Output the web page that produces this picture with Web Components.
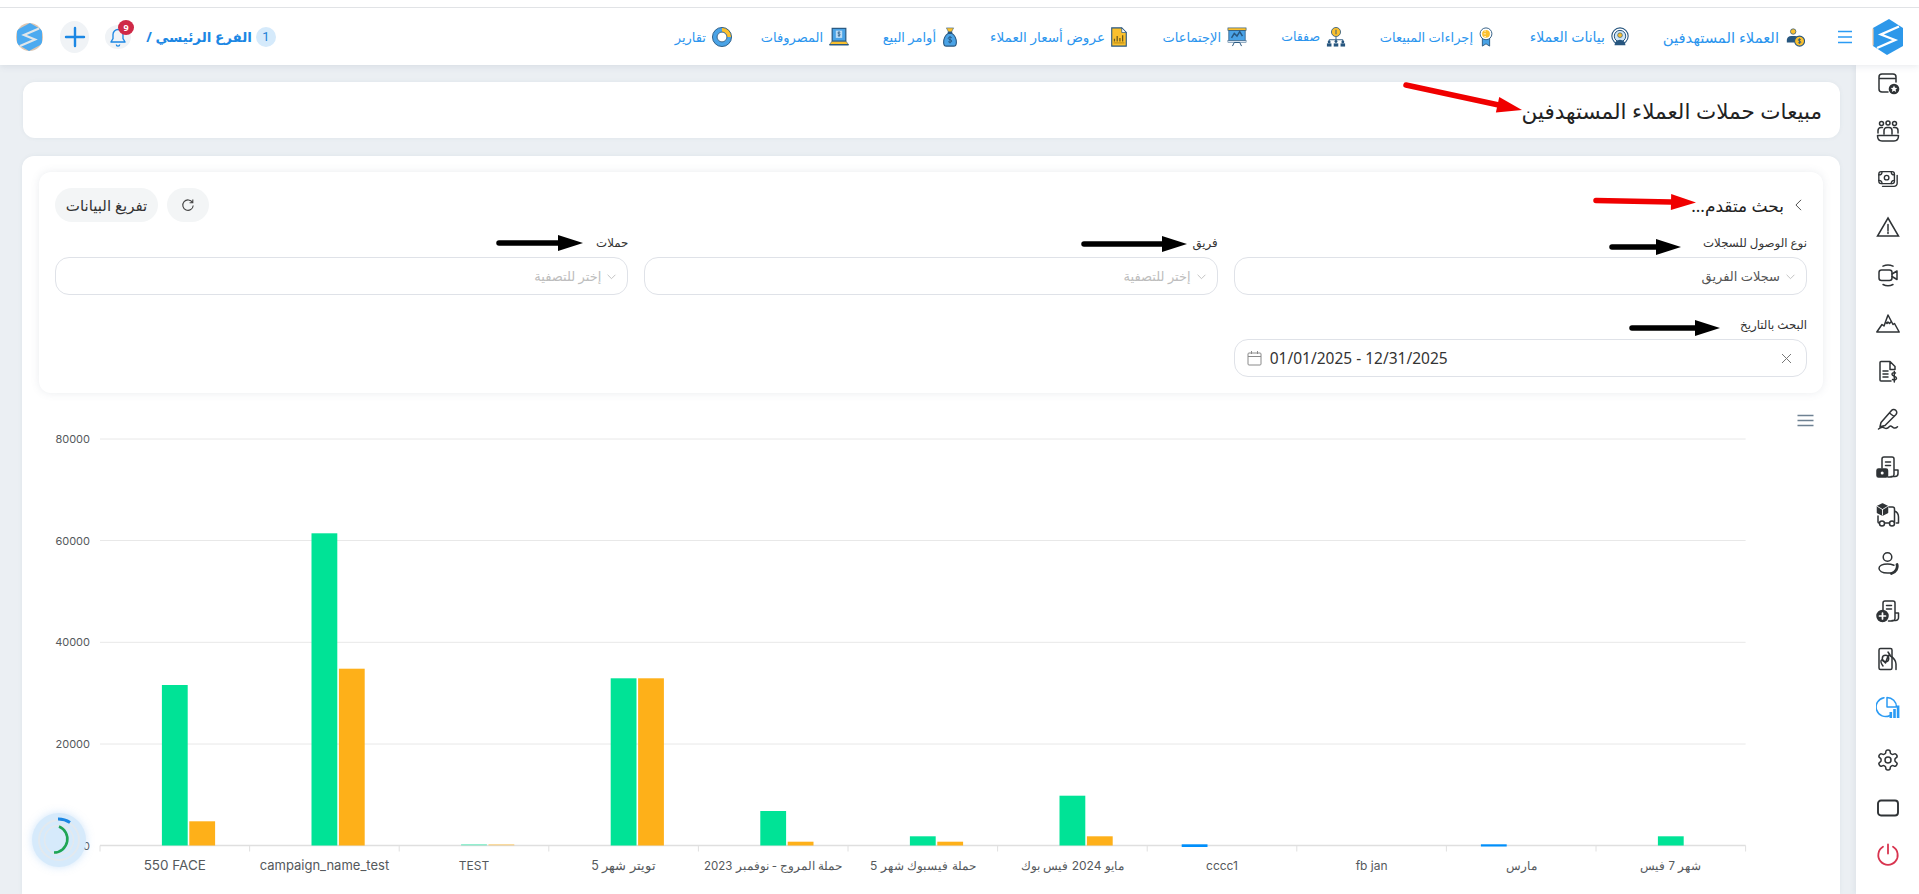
<!DOCTYPE html>
<html lang="ar" dir="rtl"><head><meta charset="utf-8"><title>مبيعات حملات العملاء المستهدفين</title>
<style>
html,body{margin:0;padding:0;height:100%;overflow:hidden;background:#fff}
body{font-family:"Noto Sans","DejaVu Sans",sans-serif;color:#333}
</style></head><body>
<app-shell>
  <top-bar slot="top">
    <brand-logo slot="start"></brand-logo>
    <ui-icon slot="start" name="menu" size="18" style="color:#2b9bf4;margin-inline-start:18px"></ui-icon>
    <nav-item icon="n1" iw="19" w="118" fs="14.8">العملاء المستهدفين</nav-item>
    <nav-item icon="n2" iw="17" w="79" fs="14">بيانات العملاء</nav-item>
    <nav-item icon="n3" iw="14" w="94" fs="13">إجراءات المبيعات</nav-item>
    <nav-item icon="n4" iw="20" w="40" fs="12.500">صفقات</nav-item>
    <nav-item icon="n5" iw="20" w="61" fs="13">الإجتماعات</nav-item>
    <nav-item icon="n6" iw="16" w="115" fs="13.600">عروض أسعار العملاء</nav-item>
    <nav-item icon="n7" iw="15" w="54" fs="13">أوامر البيع</nav-item>
    <nav-item icon="n8" iw="20" w="59" fs="13">المصروفات</nav-item>
    <nav-item icon="n9" iw="19" w="28" fs="13">تقارير</nav-item>
    <branch-tools slot="end"></branch-tools>
  </top-bar>
  <side-rail slot="rail"></side-rail>
  <page-title>مبيعات حملات العملاء المستهدفين</page-title>
  <main-card>
    <filter-card>
      <filter-field label="نوع الوصول للسجلات"><select-box value="سجلات الفريق"></select-box></filter-field>
      <filter-field label="فريق"><select-box placeholder="إختر للتصفية"></select-box></filter-field>
      <filter-field label="حملات"><select-box placeholder="إختر للتصفية"></select-box></filter-field>
      <filter-field label="البحث بالتاريخ"><date-box>01/01/2025 - 12/31/2025</date-box></filter-field>
    </filter-card>
    <bar-chart></bar-chart>
  </main-card>
  <note-arrow x1="1406" y1="85" x2="1522" y2="110" color="#f00000"></note-arrow>
  <note-arrow x1="1596" y1="200.5" x2="1696" y2="202.5" color="#f00000"></note-arrow>
  <note-arrow x1="1612" y1="247" x2="1681" y2="247" color="#000"></note-arrow>
  <note-arrow x1="1632" y1="328" x2="1720" y2="328" color="#000"></note-arrow>
  <note-arrow x1="1084" y1="244" x2="1187" y2="244" color="#000"></note-arrow>
  <note-arrow x1="499" y1="243" x2="583" y2="243" color="#000"></note-arrow>
  <busy-spinner></busy-spinner>
</app-shell>
<script>
const S='#2f3336';
const Y='#fbc02d',N='#27567f',B='#4aa3e6';
const ICONS={
menu:`<path d="M2 3.5h14M2 9h14M2 14.5h14" stroke="currentColor" stroke-width="1.5" fill="none"/>`,
chev:`<path d="M3 5.5 7.5 10 12 5.5" fill="none" stroke="currentColor" stroke-width="1"/>`,
plus:`<path d="M12 3v18M3 12h18" stroke="currentColor" stroke-width="2.4" stroke-linecap="round"/>`,
bell:`<path d="M12 3a6 6 0 0 0-6 6v5l-2.5 4h17L18 14V9a6 6 0 0 0-6-6zM10 21a2 2 0 0 0 4 0" fill="none" stroke="currentColor" stroke-width="1.6" stroke-linejoin="round"/>`,
n1:`<circle cx="9" cy="5" r="3" fill="${Y}" stroke="${N}" stroke-width=".8"/><path d="M2 17v-3a5 5 0 0 1 5-4h4a5 5 0 0 1 3 1l-4 6z" fill="${N}"/><circle cx="16" cy="15.5" r="5.5" fill="${Y}" stroke="${N}" stroke-width="1.2"/><path d="M16 12.5v6M17.6 14c-1-1-3.2-.8-3.2.4s3.2.9 3.2 2.2-2.2 1.4-3.2.4" fill="none" stroke="${N}" stroke-width=".9"/>`,
n2:`<circle cx="11" cy="10" r="9" fill="#fff" stroke="${N}" stroke-width="1.2"/><circle cx="11" cy="10" r="6.3" fill="#cfe6f8" stroke="${N}" stroke-width="1.1"/><circle cx="11" cy="9" r="2.6" fill="${Y}" stroke="${N}" stroke-width=".7"/><path d="M5 20a6 6 0 0 1 12 0z" fill="${N}"/>`,
n3:`<path d="M7 12v9l4-2.5L15 21v-9z" fill="${B}" stroke="${N}" stroke-width="1"/><circle cx="11" cy="7.5" r="6.5" fill="#fff" stroke="${N}" stroke-width="1"/><circle cx="11" cy="7.5" r="4.3" fill="${Y}"/><path d="M11 4.5h-2M11 7.5H8.5M11 10.5H9" stroke="#fff" stroke-width=".8"/>`,
n4:`<circle cx="11" cy="5.5" r="5" fill="${Y}" stroke="${N}" stroke-width=".9"/><path d="M11 3v5" stroke="${N}" stroke-width="1"/><path d="M11 11v3M3.5 16v-2h15v2" stroke="${N}" fill="none" stroke-width="1"/><g fill="${N}"><circle cx="3.5" cy="16.5" r="1.6"/><circle cx="11" cy="16" r="1.6"/><circle cx="18.5" cy="16.5" r="1.6"/><rect x="1" y="18" width="5" height="3.5"/><rect x="8.5" y="18" width="5" height="3.5"/><rect x="16" y="18" width="5" height="3.5"/></g>`,
n5:`<rect x="1" y="1" width="20" height="3" fill="${Y}" stroke="${N}" stroke-width=".7"/><rect x="2" y="4" width="18" height="11" fill="${B}" stroke="${N}" stroke-width=".8"/><path d="M5 12l3-5 3 3 3-5 3 5" fill="none" stroke="${N}" stroke-width="1.6"/><rect x="1" y="15" width="20" height="2" fill="#d9e6f2" stroke="${N}" stroke-width=".5"/><path d="M6 21l2-4h6l2 4" fill="none" stroke="${N}" stroke-width="1.1"/>`,
n6:`<path d="M3 1h11l5 5v15H3z" fill="${Y}" stroke="${N}" stroke-width="1.2"/><path d="M14 1v5h5z" fill="#fff" stroke="${N}" stroke-width=".8"/><path d="M6 16v-3M9 16v-6M12 16v-4M15 16V9" stroke="#6b5a1e" stroke-width="1.4"/><path d="M5 17.5h12" stroke="#b98d12" stroke-width="1.2"/>`,
n7:`<path d="M7 1h8l-2.4 4.5H9.4z" fill="${Y}" stroke="${N}" stroke-width=".6"/><rect x="8.5" y="5.2" width="5" height="1.6" fill="${N}"/><path d="M9 7c-3 2-5 6-5 10 0 3 1.500 4 3 4h8c1.500 0 3-1 3-4 0-4-2-8-5-10z" fill="${B}" stroke="${N}" stroke-width="1.2"/><path d="M11 10v8M13 11.8c-1-1-4-.9-4 .7s4 1.2 4 2.9-3 1.7-4 .7" fill="none" stroke="${N}" stroke-width="1"/>`,
n8:`<rect x="3.5" y="1.5" width="15" height="14" fill="${B}" stroke="${N}" stroke-width="1.3"/><rect x="7.5" y="4" width="7" height="8" fill="#bcdcf5"/><path d="M11 5v6M12.4 6c-.8-.7-2.8-.6-2.8.6s2.8.8 2.8 2-2 1.1-2.8.5" fill="none" stroke="${N}" stroke-width=".8"/><path d="M3 16h16l2.5 3.5h-21z" fill="${Y}" stroke="${N}" stroke-width=".6"/><path d="M.5 19.5h21" stroke="${N}" stroke-width="1.5"/>`,
n9:`<circle cx="11" cy="11" r="8" fill="none" stroke="${B}" stroke-width="5"/><path d="M11 3a8 8 0 0 1 8 8" fill="none" stroke="${Y}" stroke-width="5"/><circle cx="11" cy="11" r="10.5" fill="none" stroke="${N}" stroke-width="1"/><circle cx="11" cy="11" r="5.4" fill="#fff" stroke="${N}" stroke-width="1"/>`,
r1:`<path d="M20 11V6a3 3 0 0 0-3-3H6a3 3 0 0 0-3 3v12a3 3 0 0 0 3 3h6M3 7.5h17"/><circle cx="18" cy="18" r="5.3" fill="${S}" stroke="none"/><path d="M18 14.6l1 2.2 2.3.2-1.7 1.6.5 2.3-2.1-1.2-2.1 1.2.5-2.3-1.7-1.6 2.3-.2z" fill="#fff" stroke="none"/>`,
r2:`<circle cx="5.5" cy="4.5" r="2"/><circle cx="12" cy="4" r="2"/><circle cx="18.5" cy="4.5" r="2"/><path d="M2 14v-2.500a3 3 0 0 1 3-3h1.500M22 14v-2.500a3 3 0 0 0-3-3h-1.500M8 15v-3.500a3 3 0 0 1 3-3h2a3 3 0 0 1 3 3V15M1.500 16.500h21c0 3.500-2 5.500-4.500 5.500H6c-2.500 0-4.500-2-4.500-5.500z"/>`,
r3:`<rect x="2" y="4" width="17" height="13" rx="2.500"/><circle cx="10.500" cy="10.500" r="2.500"/><path d="M2 7.500c2 0 3.500-1.500 3.500-3.500M19 7.500c-2 0-3.500-1.500-3.500-3.500M2 13.500c2 0 3.500 1.500 3.500 3.500M19 13.500c-2 0-3.500 1.500-3.500 3.500M22 8v8.500a3.500 3.500 0 0 1-3.500 3.500H6"/>`,
r4:`<path d="M12 3 22.500 21h-21z" stroke-linejoin="miter"/><path d="M12 9.500v6M12 17v1.500"/>`,
r5:`<rect x="3" y="7" width="13" height="10.500" rx="2.500"/><path d="M16 11l5-3v8.500l-5-3M7 3.200a11 11 0 0 1 10 0M7 21.500a11 11 0 0 0 10 0"/>`,
r6:`<path d="M.800 21 6 13.500l2 1.500 4-11 5 9.500 1.500-1 4.700 8.500zM9.500 11l1.500 1.500 1-1.500 1.500 1.500 1.300-1.500"/>`,
r7:`<path d="M14 2.500H5a1 1 0 0 0-1 1V21a1 1 0 0 0 1 1h10M14 2.500l5 5v3h-5zM7 12h5M7 15h5M7 18h5M19.500 14c-2-.8-3.500 0-3.500 1.300 0 2.500 4.500 1.500 4.500 4 0 1.400-2 2-4 1.200M18.300 12.500v10.500"/>`,
r8:`<path d="M5 15.500 15.500 3.500a3 3 0 0 1 4.500 4L9 18.500l-5 1.200zM13.500 6l4.500 3.500M2.500 22c3-2.500 4.500-2 6-1s3 .8 5-1.500c1.500-1.600 2.500.5 4 1.200 1.500.6 3 0 4-1"/>`,
r9:`<path d="M6 13V4a2 2 0 0 1 2-2h8a2 2 0 0 1 2 2v15.500a3 3 0 0 1-3 2.500h-3M18 15h4v3.500a3 3 0 0 1-3 3h-4M9.500 7h5M9.500 10.500h5"/><rect x="1" y="14" width="10.500" height="8" rx="1.500" fill="${S}"/><circle cx="6.200" cy="18" r="1.500" fill="#fff" stroke="none"/>`,
r10:`<path d="M6.500 1 11.500 3.500v6L6.500 12 1.500 9.500v-6z" fill="${S}"/><path d="M6.500 6.500 1.500 3.500M6.500 6.500l5-3M6.500 6.500V12" stroke="#fff" stroke-width=".9"/><path d="M13 4h3.500c1.500 0 2 1 2 2v14M18.500 8c2.500 1 4 3.500 4 6v6h-2M2 13v6a1 1 0 0 0 1 1M9 20h4.500"/><circle cx="6" cy="20.500" r="2.500"/><circle cx="16" cy="20.500" r="2.500"/>`,
r11:`<circle cx="11.500" cy="6" r="4.300"/><path d="M18 14.300c-2-.8-4-1.300-6.500-1.300-5 0-8.500 1.800-8.500 4.300S6 22 11.500 22H16"/><path d="M21 13.500c1 3.500-1 7.500-5.500 9" stroke-width="2.800"/>`,
r12:`<path d="M7 12V4a2 2 0 0 1 2-2h8a2 2 0 0 1 2 2v15.500a3 3 0 0 1-3 2.500h-3.500M19 14h3.500v4a3 3 0 0 1-3 3.500H16M10.500 6.500h5M10.500 10h5"/><circle cx="6.500" cy="17" r="5.500" fill="${S}"/><path d="M6.500 14v6M3.500 17h6" stroke="#fff" stroke-width="1.700"/>`,
r13:`<rect x="3" y="1.500" width="13" height="21" rx="1.500"/><circle cx="9.500" cy="11.500" r="3.200"/><path d="M7 19c-1.500-2-3-5-1.500-6 1-.6 2.500 1 4 3 1-3 2-6 3.500-8 2.500 1.500 7 5 7 9v5.500"/><path d="M14 8l-2-3"/>`,
r14:`<path d="M11 2.500v9.500h9.500a9.500 9.500 0 0 0-9.500-9.500zM14 20.500a9.500 9.500 0 1 1-6-17.800" fill="none"/><g fill="#2b9bf4" stroke="none"><rect x="13.500" y="17" width="2.600" height="6"/><rect x="17.200" y="14" width="2.600" height="9"/><rect x="20.800" y="10.500" width="2.600" height="12.500"/></g>`,
r15:`<path d="M12.220 2h-.44a2 2 0 0 0-2 2v.18a2 2 0 0 1-1 1.730l-.43.250a2 2 0 0 1-2 0l-.15-.08a2 2 0 0 0-2.730.730l-.22.380a2 2 0 0 0 .730 2.730l.15.100a2 2 0 0 1 1 1.720v.510a2 2 0 0 1-1 1.740l-.15.090a2 2 0 0 0-.730 2.730l.22.380a2 2 0 0 0 2.730.730l.15-.08a2 2 0 0 1 2 0l.43.250a2 2 0 0 1 1 1.730V20a2 2 0 0 0 2 2h.44a2 2 0 0 0 2-2v-.18a2 2 0 0 1 1-1.730l.43-.25a2 2 0 0 1 2 0l.15.080a2 2 0 0 0 2.730-.730l.22-.390a2 2 0 0 0-.730-2.730l-.15-.08a2 2 0 0 1-1-1.740v-.5a2 2 0 0 1 1-1.740l.15-.09a2 2 0 0 0 .730-2.730l-.22-.380a2 2 0 0 0-2.730-.730l-.15.080a2 2 0 0 1-2 0l-.43-.25a2 2 0 0 1-1-1.730V4a2 2 0 0 0-2-2z"/><circle cx="12" cy="12" r="3"/>`,
r16:`<rect x="2" y="4.500" width="20" height="15" rx="3" stroke-width="1.900"/>`,
r17:`<path d="M12 2.500v9M7 4.800a9.700 9.700 0 1 0 10 0" stroke="#d8344f" stroke-width="1.800"/>`
};
const def=(name,css,html,init)=>customElements.define(name,class extends HTMLElement{
  constructor(){super();this.attachShadow({mode:'open'}).innerHTML=`<style>${css}</style>${html}`;}
  connectedCallback(){init&&init(this,this.shadowRoot)}
});
const vb=n=>n=='menu'?18:n=='chev'?15:/^n\d/.test(n)?22:24;
const svgIcon=(n,s)=>{const stroked=n[0]=='r';const v=vb(n);return `<svg width="${s}" height="${s}" viewBox="0 0 ${v} ${v}" ${stroked?`fill="none" stroke="${n=='r14'?'#2b9bf4':S}" stroke-width="1.500" stroke-linecap="round" stroke-linejoin="round"`:''} style="display:block;flex:none">${ICONS[n]}</svg>`};
def('ui-icon',':host{display:inline-flex;flex:none;justify-content:center}','',(h,r)=>{const b=document.createElement('template');b.innerHTML=svgIcon(h.getAttribute('name'),h.getAttribute('size')||24);r.appendChild(b.content)});
def('app-shell',`:host{display:grid;position:relative;width:1919px;height:894px;overflow:hidden;grid-template-columns:63px 1fr;grid-template-rows:65px 1fr;background:#ebeff3;direction:rtl}
 .top{grid-column:1/3;grid-row:1;z-index:3;}
 .rail{grid-column:1;grid-row:2;z-index:2}
 .main{grid-column:2;grid-row:2;padding:17px 16px 0 23px;display:flex;flex-direction:column;gap:18px;min-width:0;overflow:hidden}
`,`<div class="top"><slot name="top"></slot></div><div class="rail"><slot name="rail"></slot></div><div class="main"><slot></slot></div>`);
def('top-bar',`:host{display:flex;box-sizing:border-box;background:#fff;border-top:1px solid #e1e3e6;margin-top:7px;height:58px;align-items:center;padding:0 15px 0 16px;box-shadow:0 2px 6px rgba(90,110,130,.12);position:relative}
 .nav{display:flex;gap:33px;margin-inline-start:32px;align-items:center}
 .s{display:flex;align-items:center}.e{margin-inline-start:auto}
 :host::before{content:"";position:absolute;left:0;right:0;top:-8px;height:7px;background:#fff}
`,`<div class="s"><slot name="start"></slot></div><div class="nav"><slot></slot></div><div class="e"><slot name="end"></slot></div>`);
def('brand-logo',':host{display:block;width:32px;height:36px}',`<svg width="32" height="36" viewBox="0 0 32 36" style="display:block"><path d="M17 0 31 9V27L15 36 1 27V9z" fill="#2d98ea"/><path d="M1 9.500v17" stroke="#f5c9a0" stroke-width="1.200"/><path d="M27 7.500 9 15.500l14 5.500-18 8" fill="none" stroke="#fff" stroke-width="2.400" stroke-linejoin="miter"/></svg>`);
def('nav-item',`:host{display:inline-flex;align-items:center;gap:6px;color:#2b95ee;white-space:nowrap}
 .i{display:flex;justify-content:center;height:20px}
 span{display:block;text-align:right}`,`<div class="i"></div><span><slot></slot></span>`,(h,r)=>{
  const box=r.querySelector('.i'),d=document.createElement('ui-icon');d.setAttribute('name',h.getAttribute('icon'));d.setAttribute('size',20);box.appendChild(d);
  box.style.width=h.getAttribute('iw')+'px';
  const s=r.querySelector('span');s.style.width=h.getAttribute('w')+'px';s.style.fontSize=h.getAttribute('fs')+'px';
});
def('branch-tools',`:host{display:flex;align-items:center;direction:rtl}
 .n{width:20px;height:20px;border-radius:50%;background:#d5eafb;color:#1b7fd6;font-size:13px;display:flex;align-items:center;justify-content:center;font-family:Roboto,sans-serif}
 .b{color:#1b87e4;font-weight:700;font-size:13.500px;margin-inline-start:4px;white-space:nowrap;width:104px}
 .bell{position:relative;width:26px;height:24px;border-radius:50%;background:#f0f3f6;display:flex;align-items:center;justify-content:center;color:#1b87e4;margin-inline-start:17px}
 .bd{position:absolute;top:-5px;right:-3px;width:16px;height:15px;border-radius:50%;background:#cf2947;color:#fff;font-size:9px;font-weight:700;display:flex;align-items:center;justify-content:center}
 .plus{width:29px;height:32px;border-radius:50%;background:#f0f3f6;display:flex;align-items:center;justify-content:center;color:#1b87e4;margin-inline-start:16px}
 .av{width:27px;height:28px;border-radius:50%;overflow:hidden;margin-inline-start:17px;background:#dcc6b2}
`,`<div class="n">1</div><div class="b">الفرع الرئيسي /</div><div class="bell"><ui-icon name="bell" size="20"></ui-icon><div class="bd">9</div></div><div class="plus"><ui-icon name="plus" size="24"></ui-icon></div><div class="av"><svg width="27" height="28" viewBox="0 0 27 28" style="display:block"><path d="M14 0 26 7v14L13 28 1 21V7z" fill="#4caaf0"/><path d="M23 5.500 8 12l11 4.500L4 23" fill="none" stroke="#dfe6ea" stroke-width="2.200"/></svg></div>`);
def('side-rail',`:host{display:flex;flex-direction:column;align-items:center;gap:24px;background:#fff;height:100%;padding-top:6px;box-sizing:border-box;box-shadow:-2px 0 5px rgba(90,110,130,.08)}`,
 Array.from({length:17},(_,i)=>`<ui-icon name="r${i+1}" size="${i==2?22:24}" style="${i==2?'margin:1px 0;':''}${i==14?'margin-top:5px;':''}${i==16?'margin-top:-2px;':''}"></ui-icon>`).join(''));
def('page-title',`:host{display:flex;align-items:center;height:56px;flex:none;background:#fff;border-radius:12px;padding:0 18px;font-size:21.500px;color:#222;box-shadow:0 0 4px rgba(90,110,130,.08)}`,`<slot></slot>`);
def('main-card',`:host{display:block;flex:1;background:#fff;border-radius:12px 12px 0 0;margin-inline-end:1px;padding:16px 17px 0;margin-left:-1px;box-shadow:0 0 4px rgba(90,110,130,.08)}`,`<slot></slot>`);
def('filter-card',`:host{display:block;background:#fff;border-radius:12px;padding:16px;box-shadow:0 0 8px rgba(90,110,130,.13)}
 .h{display:flex;justify-content:space-between;align-items:center;height:34px;margin-bottom:11px}
 .t{display:flex;align-items:center;gap:11px;font-size:17px;color:#222}
 .btns{display:flex;gap:9px}
 .btn{height:34px;border-radius:17px;background:#f3f5f6;display:flex;align-items:center;justify-content:center;font-size:15px;color:#333;box-sizing:border-box}
 .g{display:grid;grid-template-columns:repeat(3,1fr);column-gap:16px;row-gap:20px}
 svg{display:block}
`,`<div class="h"><div class="t"><svg width="7" height="12" viewBox="0 0 8 14" style="margin-inline-start:5px"><path d="M7 1 1 7l6 6" fill="none" stroke="#333" stroke-width="1"/></svg><span>بحث متقدم...</span></div>
<div class="btns"><div class="btn" style="width:42px"><svg width="14" height="14" viewBox="0 0 14 14"><path d="M11.500 4.500A5.200 5.200 0 1 0 12.200 7.500M11.800 1.500v3.200H8.600" fill="none" stroke="#444" stroke-width="1.100"/></svg></div><div class="btn" style="width:103px">تفريغ البيانات</div></div></div>
<div class="g"><slot></slot></div>`);
def('filter-field',`:host{display:block;min-width:0}
 label{display:block;height:19px;line-height:19px;margin-bottom:5px;font-size:11.800px;color:#333;white-space:nowrap}`,`<label></label><slot></slot>`,(h,r)=>{r.querySelector('label').textContent=h.getAttribute('label')});
def('select-box',`:host{display:flex;align-items:center;height:38px;box-sizing:border-box;border:1px solid #dfe2e8;border-radius:14px;padding:0 9px;gap:4px;font-size:13px;color:#555}
 .p{color:#bdbdbd}`,`<ui-icon name="chev" size="13" style="color:#bbb"></ui-icon><span></span>`,(h,r)=>{const s=r.querySelector('span');if(h.hasAttribute('value'))s.textContent=h.getAttribute('value');else{s.textContent=h.getAttribute('placeholder');s.className='p'}});
def('date-box',`:host{display:flex;direction:ltr;align-items:center;height:38px;box-sizing:border-box;border:1px solid #dfe2e8;border-radius:14px;padding:0 14px 0 12px;gap:8px;font:15.500px "Noto Sans",sans-serif;color:#333}
 .x{margin-left:auto}svg{display:block}`,`<svg width="15" height="16" viewBox="0 0 15 16"><path d="M2 3h11a1 1 0 0 1 1 1v10a1 1 0 0 1-1 1H2a1 1 0 0 1-1-1V4a1 1 0 0 1 1-1zM1 6.500h13M4.500 1v3M10.500 1v3" fill="none" stroke="#8a8a8a" stroke-width="1"/></svg><span><slot></slot></span><svg class="x" width="11" height="11" viewBox="0 0 11 11"><path d="M1 1l9 9M10 1l-9 9" stroke="#777" stroke-width="1"/></svg>`);
def('note-arrow',`:host{position:absolute;left:0;top:0;width:0;height:0;z-index:5;pointer-events:none}svg{position:absolute;left:0;top:0;overflow:visible}`,`<svg width="1" height="1"></svg>`,(h,r)=>{
  const [a,b,c,d]=['x1','y1','x2','y2'].map(k=>+h.getAttribute(k)),col=h.getAttribute('color');
  const L=Math.hypot(c-a,d-b),ux=(c-a)/L,uy=(d-b)/L,bx=c-ux*25,by=d-uy*25,W=8;
  r.querySelector('svg').innerHTML=`<line x1="${a}" y1="${b}" x2="${bx}" y2="${by}" stroke="${col}" stroke-width="5.500" stroke-linecap="round"/><polygon fill="${col}" points="${c},${d} ${bx-uy*W},${by+ux*W} ${bx+uy*W},${by-ux*W}"/>`;
});
def('bar-chart',`:host{display:block;margin:0 -17px;height:501px}svg{display:block;direction:ltr}text{font-family:Inter,"Noto Sans",sans-serif;fill:#55595c}`,`<svg width="1818" height="501" viewBox="22 393 1818 501"></svg>`,(h,r)=>{
  const X0=100,BW=149.6,AX=845.5;let o='';
  [[80000,439],[60000,540.500],[40000,642.300],[20000,744]].forEach(([v,y])=>{o+=`<line x1="${X0}" x2="1745.600" y1="${y}" y2="${y}" stroke="#e8e8e8"/><text x="90" y="${y+4}" text-anchor="end" font-size="11">${v}</text>`});
  o+=`<text x="90" y="849.500" text-anchor="end" font-size="11">0</text>`;
  o+=`<line x1="${X0}" x2="1745.600" y1="${AX}" y2="${AX}" stroke="#dfdfdf" stroke-width="1.500"/>`;
  for(let i=0;i<=11;i++){const x=X0+BW*i;o+=`<line x1="${x}" x2="${x}" y1="${AX}" y2="${AX+6}" stroke="#e0e0e0"/>`}
  const cats=[['550 FACE','ltr',13.5],['campaign_name_test','ltr',13],['TEST','ltr',12],['تويتر شهر 5','rtl',12.5],['حملة المروج - نوفمبر 2023','rtl',11.5],['حملة فيسبوك شهر 5','rtl',12],['مايو 2024 فيس بوك','rtl',12],['cccc1','ltr',12],['fb jan','ltr',12],['مارس','rtl',12],['شهر 7 فيس','rtl',11.5]];
  const bars=[[0,1,685],[0,2,821.300],[1,1,533.300],[1,2,668.700],[2,1,844,.4],[2,2,844,.4],[3,1,678.300],[3,2,678.300],[4,1,811],[4,2,841.700],[5,1,836.300],[5,2,841.700],[6,1,795.700],[6,2,836.300],[7,0,844.300,1,847],[9,0,844.300,1,846.500],[10,1,836.300]];
  const col=['#008ffb','#00e396','#feb019'];
  bars.forEach(([c,s,t,op=1,bot=AX])=>{const x=X0+BW*c+33.700+27.400*s+.8;o+=`<rect x="${x.toFixed(1)}" y="${t}" width="25.800" height="${bot-t}" fill="${col[s]}" opacity="${op}"/>`});
  cats.forEach(([t,d,fs],i)=>{o+=`<text x="${X0+BW*i+BW/2}" y="870" text-anchor="middle" font-size="${fs}" direction="${d}">${t}</text>`});
  o+=`<path d="M1797.500 415.500h16M1797.500 420.500h16M1797.500 425.500h16" stroke="#6e8192" stroke-width="1.600"/>`;
  r.querySelector('svg').innerHTML=o;
});
def('busy-spinner',`:host{position:absolute;left:32px;top:813px;width:54px;height:54px;border-radius:50%;background:#d6eafb;z-index:6;box-shadow:0 0 8px rgba(120,180,240,.35)}svg{display:block}`,`<svg width="54" height="54" viewBox="0 0 54 54"><circle cx="27" cy="27" r="20" fill="none" stroke="#e3e9ee" stroke-width="2"/><circle cx="27" cy="27" r="14.500" fill="none" stroke="#e3e9ee" stroke-width="1.500"/><path d="M27 13.500A13.500 13.500 0 0 1 22 39.500" fill="none" stroke="#1fa555" stroke-width="2.600"/><path d="M26 6a21 21 0 0 1 12 3.500" fill="none" stroke="#1b87e4" stroke-width="3"/></svg>`);
</script>
</body></html>
